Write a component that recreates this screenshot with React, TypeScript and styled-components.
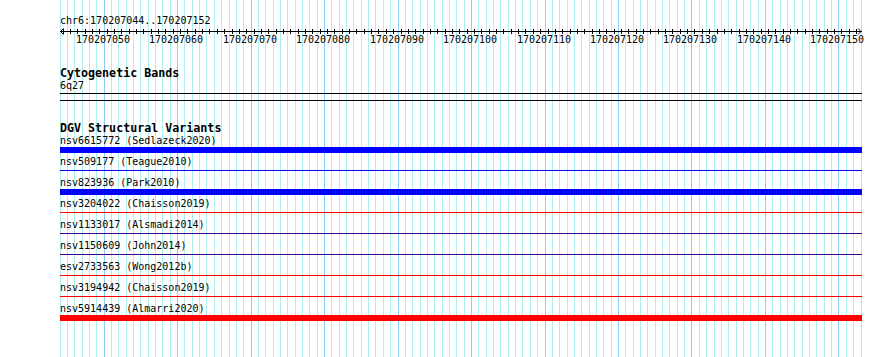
import React from 'react';
import styled, { createGlobalStyle } from 'styled-components';

const GlobalStyle = createGlobalStyle`
  body {
    margin: 0;
    background: #fff;
  }
`;

const START = 170207044;
const BASES = 109;
const LEFT = 60;
const TRACK_W = 802;

// x of base boundary i, in track coordinates
const bx = (i: number) => Math.floor((i * (TRACK_W - 1)) / BASES);

const Page = styled.div`
  position: relative;
  width: 890px;
  height: 357px;
  overflow: hidden;
  background: #fff;
  font-family: "DejaVu Sans Mono", "Liberation Mono", monospace;
  color: #000;
`;

const GridLayer = styled.svg`
  position: absolute;
  top: 0;
  left: ${LEFT}px;
  z-index: 0;
`;

const Content = styled.div`
  position: relative;
  z-index: 1;
  display: flex;
  flex-direction: column;
  width: ${TRACK_W}px;
  margin-left: ${LEFT}px;
  padding-top: 15px;
`;

const PositionLabel = styled.div`
  font-size: 10px;
  line-height: 12px;
  white-space: pre;
`;

const RulerSvg = styled.svg`
  display: block;
  overflow: visible;
`;

const TrackTitle = styled.div<{ $gap: number }>`
  margin-top: ${(p) => p.$gap}px;
  font-size: 11.67px;
  font-weight: bold;
  line-height: 13px;
  white-space: pre;
`;

const ItemLabel = styled.div`
  font-size: 10px;
  line-height: 12px;
  white-space: pre;
`;

const BandBox = styled.div`
  box-sizing: border-box;
  height: 8px;
  margin-top: 1px;
  border-top: 1px solid #000;
  border-bottom: 1px solid #000;
`;

const VariantRow = styled.div`
  display: flex;
  flex-direction: column;
  height: 21px;
`;

const FeatureLane = styled.div`
  height: 6px;
`;

const Feature = styled.div<{ $color: string; $thick?: boolean }>`
  width: 100%;
  height: ${(p) => (p.$thick ? 6 : 1)}px;
  margin-top: ${(p) => (p.$thick ? 0 : 2)}px;
  background: ${(p) => p.$color};
`;

const BLUE = '#0000ff';
const RED = '#ff0000';
const PURPLE = '#3c008c';

const variants = [
  { name: 'nsv6615772 (Sedlazeck2020)', color: BLUE, thick: true },
  { name: 'nsv509177 (Teague2010)', color: BLUE },
  { name: 'nsv823936 (Park2010)', color: BLUE, thick: true },
  { name: 'nsv3204022 (Chaisson2019)', color: RED },
  { name: 'nsv1133017 (Alsmadi2014)', color: PURPLE },
  { name: 'nsv1150609 (John2014)', color: PURPLE },
  { name: 'esv2733563 (Wong2012b)', color: RED },
  { name: 'nsv3194942 (Chaisson2019)', color: RED },
  { name: 'nsv5914439 (Almarri2020)', color: RED, thick: true },
];

const Grid = () => (
  <GridLayer width={TRACK_W} height={357} shapeRendering="crispEdges">
    {Array.from({ length: BASES + 1 }, (_, i) => {
      const major = (START + i) % 10 === 0;
      return (
        <line
          key={i}
          x1={bx(i) + 0.5}
          x2={bx(i) + 0.5}
          y1={0}
          y2={357}
          stroke={major ? '#87cefa' : '#afeeee'}
          strokeWidth={1}
        />
      );
    })}
  </GridLayer>
);

const Ruler = () => {
  const labels = [];
  for (let i = 0; i <= BASES; i++) {
    if ((START + i) % 10 === 0) labels.push(i);
  }
  return (
    <RulerSvg width={TRACK_W} height={20}>
      <g stroke="#000" strokeWidth={1} shapeRendering="crispEdges">
        <line x1={0} x2={TRACK_W} y1={4.5} y2={4.5} />
        {Array.from({ length: BASES }, (_, i) => (
          <line key={i} x1={bx(i) + 3.5} x2={bx(i) + 3.5} y1={2} y2={7} />
        ))}
      </g>
      <g stroke="#000" strokeWidth={1} fill="none">
        <polyline points="3.5,1.5 0.5,4.5 3.5,7.5" />
        <polyline points={`${TRACK_W - 4},1.5 ${TRACK_W - 1},4.5 ${TRACK_W - 4},7.5`} />
      </g>
      <g
        fontFamily='"DejaVu Sans Mono", "Liberation Mono", monospace'
        fontSize={10}
        textAnchor="middle"
        fill="#000"
      >
        {labels.map((i) => (
          <text key={i} x={bx(i) - 1} y={16}>
            {START + i}
          </text>
        ))}
      </g>
    </RulerSvg>
  );
};

const App = () => (
  <Page>
    <GlobalStyle />
    <Grid />
    <Content>
      <PositionLabel>chr6:170207044..170207152</PositionLabel>
      <Ruler />
      <TrackTitle $gap={20}>Cytogenetic Bands</TrackTitle>
      <ItemLabel>6q27</ItemLabel>
      <BandBox />
      <TrackTitle $gap={21}>DGV Structural Variants</TrackTitle>
      {variants.map((v) => (
        <VariantRow key={v.name}>
          <ItemLabel>{v.name}</ItemLabel>
          <FeatureLane>
            <Feature $color={v.color} $thick={v.thick} />
          </FeatureLane>
        </VariantRow>
      ))}
    </Content>
  </Page>
);

export default App;
